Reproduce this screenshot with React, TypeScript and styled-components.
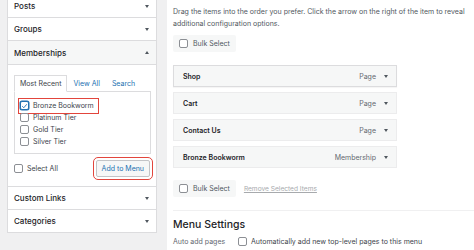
import React from "react";
import styled, { createGlobalStyle } from "styled-components";

const GlobalStyle = createGlobalStyle`
  html, body { margin: 0; padding: 0; }
  body {
    background: #f0f0f1;
    font-family: Inter, "Noto Sans", "Liberation Sans", sans-serif;
    color: #1d2327;
  }
`;

const Page = styled.div`
  display: flex;
  align-items: flex-start;
  width: 474px;
  height: 250px;
  overflow: hidden;
  background: #f0f0f1;
`;

const Sidebar = styled.div`
  width: 148px;
  margin: -5px 0 0 7px;
  background: #fff;
  border: 1px solid #dcdcde;
  border-top: none;
`;

const SectionHead = styled.div<{ $open?: boolean }>`
  display: flex;
  align-items: center;
  justify-content: space-between;
  height: ${(p) => (p.$open ? 23 : 22)}px;
  padding: 0 7px 0 6px;
  border-bottom: 1px solid #dcdcde;
  background: ${(p) => (p.$open ? "#f6f7f7" : "#fff")};
  font-size: 8px;
  font-weight: 500;
  &:last-child {
    border-bottom: none;
  }
`;

const Caret = styled.span<{ $up?: boolean }>`
  width: 0;
  height: 0;
  border-left: 2.5px solid transparent;
  border-right: 2.5px solid transparent;
  ${(p) =>
    p.$up
      ? "border-bottom: 3px solid #50575e;"
      : "border-top: 3px solid #50575e;"}
`;

const SectionBody = styled.div`
  padding: 11px 5px 9px 6px;
  border-bottom: 1px solid #dcdcde;
`;

const Tabs = styled.div`
  display: flex;
  align-items: flex-end;
  height: 15px;
  font-size: 7px;
`;

const Tab = styled.span<{ $active?: boolean }>`
  display: flex;
  align-items: center;
  height: 15px;
  padding: 0 5px;
  margin-bottom: -1px;
  color: ${(p) => (p.$active ? "#3c434a" : "#2271b1")};
  background: ${(p) => (p.$active ? "#fff" : "transparent")};
  border: 1px solid ${(p) => (p.$active ? "#dcdcde" : "transparent")};
  border-bottom-color: ${(p) => (p.$active ? "#fff" : "transparent")};
  position: relative;
`;

const ListBox = styled.div`
  height: 63px;
  box-sizing: border-box;
  border: 1px solid #dcdcde;
  padding: 8px 5px 6px;
  display: flex;
  flex-direction: column;
  align-items: flex-start;
`;

const Item = styled.label<{ $marked?: boolean }>`
  display: inline-flex;
  align-items: center;
  gap: 4px;
  height: 12.5px;
  font-size: 7px;
  color: #3c434a;
  ${(p) =>
    p.$marked
      ? "outline: 1.5px solid #e2453c; outline-offset: 1.5px; padding-right: 3px;"
      : ""}
`;

const Box = styled.span<{ $checked?: boolean }>`
  box-sizing: border-box;
  width: 9px;
  height: 9px;
  flex: none;
  border-radius: 2px;
  background: #fff;
  border: 1px solid ${(p) => (p.$checked ? "#2271b1" : "#8c8f94")};
  display: flex;
  align-items: center;
  justify-content: center;
  ${(p) => (p.$checked ? "box-shadow: 0 0 0 0.5px #2271b1;" : "")}
`;

const FootRow = styled.div`
  display: flex;
  align-items: center;
  justify-content: space-between;
  margin-top: 6px;
  height: 17px;
  padding-right: 1px;
`;

const AddButton = styled.button`
  height: 17px;
  padding: 0 5px;
  font-family: inherit;
  font-size: 7px;
  color: #2271b1;
  background: #f6f7f7;
  border: 1px solid #c3c4c7;
  border-radius: 2px;
  outline: 1.5px solid #e2453c;
  outline-offset: 2px;
`;

const Gap = styled.div`
  width: 10px;
  flex: none;
`;

const Main = styled.div`
  flex: 1;
  align-self: stretch;
  background: #fff;
  padding: 6px 0 0 6px;
`;

const Intro = styled.p`
  margin: 0;
  font-size: 7px;
  line-height: 12px;
  color: #50575e;
`;

const BulkButton = styled.div`
  display: inline-flex;
  align-items: center;
  gap: 5px;
  height: 17px;
  padding: 0 6px;
  background: #f6f7f7;
  border-radius: 2px;
  font-size: 7px;
  color: #50575e;
`;

const BulkRow = styled.div<{ $top: number }>`
  display: flex;
  align-items: center;
  gap: 8px;
  margin-top: ${(p) => p.$top}px;
`;

const RemoveLink = styled.span`
  font-size: 6.6px;
  color: #a7aaad;
  text-decoration: underline;
`;

const MenuList = styled.div`
  display: flex;
  flex-direction: column;
  gap: 5px;
  width: 224px;
  margin-top: 13px;
`;

const MenuItem = styled.div<{ $raised?: boolean }>`
  display: flex;
  align-items: center;
  height: 22px;
  box-sizing: border-box;
  padding: 0 8px 0 9px;
  background: #f6f7f7;
  border: 1px solid ${(p) => (p.$raised ? "#dcdcde" : "#ececed")};
  ${(p) => (p.$raised ? "box-shadow: 0 1px 1px rgba(0,0,0,0.04);" : "")}
  font-size: 7px;
`;

const ItemTitle = styled.span`
  flex: 1;
  font-weight: 600;
  color: #1d2327;
`;

const ItemType = styled.span`
  color: #646970;
  margin-right: 8px;
`;

const Divider = styled.div`
  height: 1px;
  background: #f0f0f1;
  margin-top: 13px;
`;

const SettingsTitle = styled.h3`
  margin: 7px 0 0;
  font-size: 10.5px;
  font-weight: 500;
  color: #1d2327;
`;

const SettingRow = styled.div`
  display: flex;
  align-items: center;
  margin-top: 6px;
  font-size: 7px;
`;

const SettingLabel = styled.span`
  width: 65px;
  color: #646970;
`;

const SettingValue = styled.label`
  display: flex;
  align-items: center;
  gap: 4px;
  color: #3c434a;
`;

const Check = () => (
  <svg width="8" height="8" viewBox="0 0 20 20">
    <path d="M3.5 10.5l4.5 4.5 8.5-10" fill="none" stroke="#2271b1" strokeWidth="2.6" />
  </svg>
);

const sections = ["Posts", "Groups"];
const tiers = ["Platinum Tier", "Gold Tier", "Silver Tier"];
const menuItems = [
  { title: "Shop", type: "Page" },
  { title: "Cart", type: "Page" },
  { title: "Contact Us", type: "Page" },
  { title: "Bronze Bookworm", type: "Membership" },
];

export default function App() {
  return (
    <Page>
      <GlobalStyle />
      <Sidebar>
        {sections.map((s) => (
          <SectionHead key={s}>
            {s}
            <Caret />
          </SectionHead>
        ))}
        <SectionHead $open>
          Memberships
          <Caret $up />
        </SectionHead>
        <SectionBody>
          <Tabs>
            <Tab $active>Most Recent</Tab>
            <Tab>View All</Tab>
            <Tab>Search</Tab>
          </Tabs>
          <ListBox>
            <Item $marked>
              <Box $checked>
                <Check />
              </Box>
              Bronze Bookworm
            </Item>
            {tiers.map((t) => (
              <Item key={t}>
                <Box />
                {t}
              </Item>
            ))}
          </ListBox>
          <FootRow>
            <Item>
              <Box />
              Select All
            </Item>
            <AddButton>Add to Menu</AddButton>
          </FootRow>
        </SectionBody>
        <SectionHead>
          Custom Links
          <Caret />
        </SectionHead>
        <SectionHead>
          Categories
          <Caret />
        </SectionHead>
      </Sidebar>
      <Gap />
      <Main>
        <Intro>
          Drag the items into the order you prefer. Click the arrow on the right of the item to reveal
          <br />
          additional configuration options.
        </Intro>
        <BulkRow $top={5}>
          <BulkButton>
            <Box />
            Bulk Select
          </BulkButton>
        </BulkRow>
        <MenuList>
          {menuItems.map((m, i) => (
            <MenuItem key={m.title} $raised={i === 0}>
              <ItemTitle>{m.title}</ItemTitle>
              <ItemType>{m.type}</ItemType>
              <Caret />
            </MenuItem>
          ))}
        </MenuList>
        <BulkRow $top={12}>
          <BulkButton>
            <Box />
            Bulk Select
          </BulkButton>
          <RemoveLink>Remove Selected Items</RemoveLink>
        </BulkRow>
        <Divider />
        <SettingsTitle>Menu Settings</SettingsTitle>
        <SettingRow>
          <SettingLabel>Auto add pages</SettingLabel>
          <SettingValue>
            <Box />
            Automatically add new top-level pages to this menu
          </SettingValue>
        </SettingRow>
      </Main>
    </Page>
  );
}
